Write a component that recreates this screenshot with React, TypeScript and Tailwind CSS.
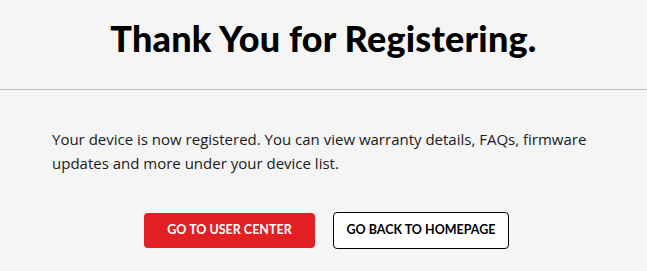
export default function App() {
  return (
    <div className="min-h-[271px] w-full bg-[#f5f5f5] font-['Lato',sans-serif] text-black">
      <div className="flex h-[90px] items-center justify-center border-b border-[#bdbdbd] pb-[14px]">
        <h1 className="text-[36px] font-black leading-none tracking-[0.2px]">Thank You for Registering.</h1>
      </div>
      <p className="pl-[52px] pr-[30px] pt-[37px] font-['Open_Sans',sans-serif] text-[15px] leading-[24px] text-[#1a1a1a]">
        Your device is now registered. You can view warranty details, FAQs, firmware updates and more under your device
        list.
      </p>
      <div className="flex justify-center gap-[18px] pl-[6px] pt-[38px]">
        <button className="h-[35px] w-[171px] rounded-[4px] bg-[#e21f22] text-[12.5px] font-bold uppercase text-white">
          Go to User Center
        </button>
        <button className="h-[37px] w-[176px] -translate-y-px rounded-[4px] border border-black bg-white text-[12.5px] font-bold uppercase text-black">
          Go back to Homepage
        </button>
      </div>
    </div>
  );
}
